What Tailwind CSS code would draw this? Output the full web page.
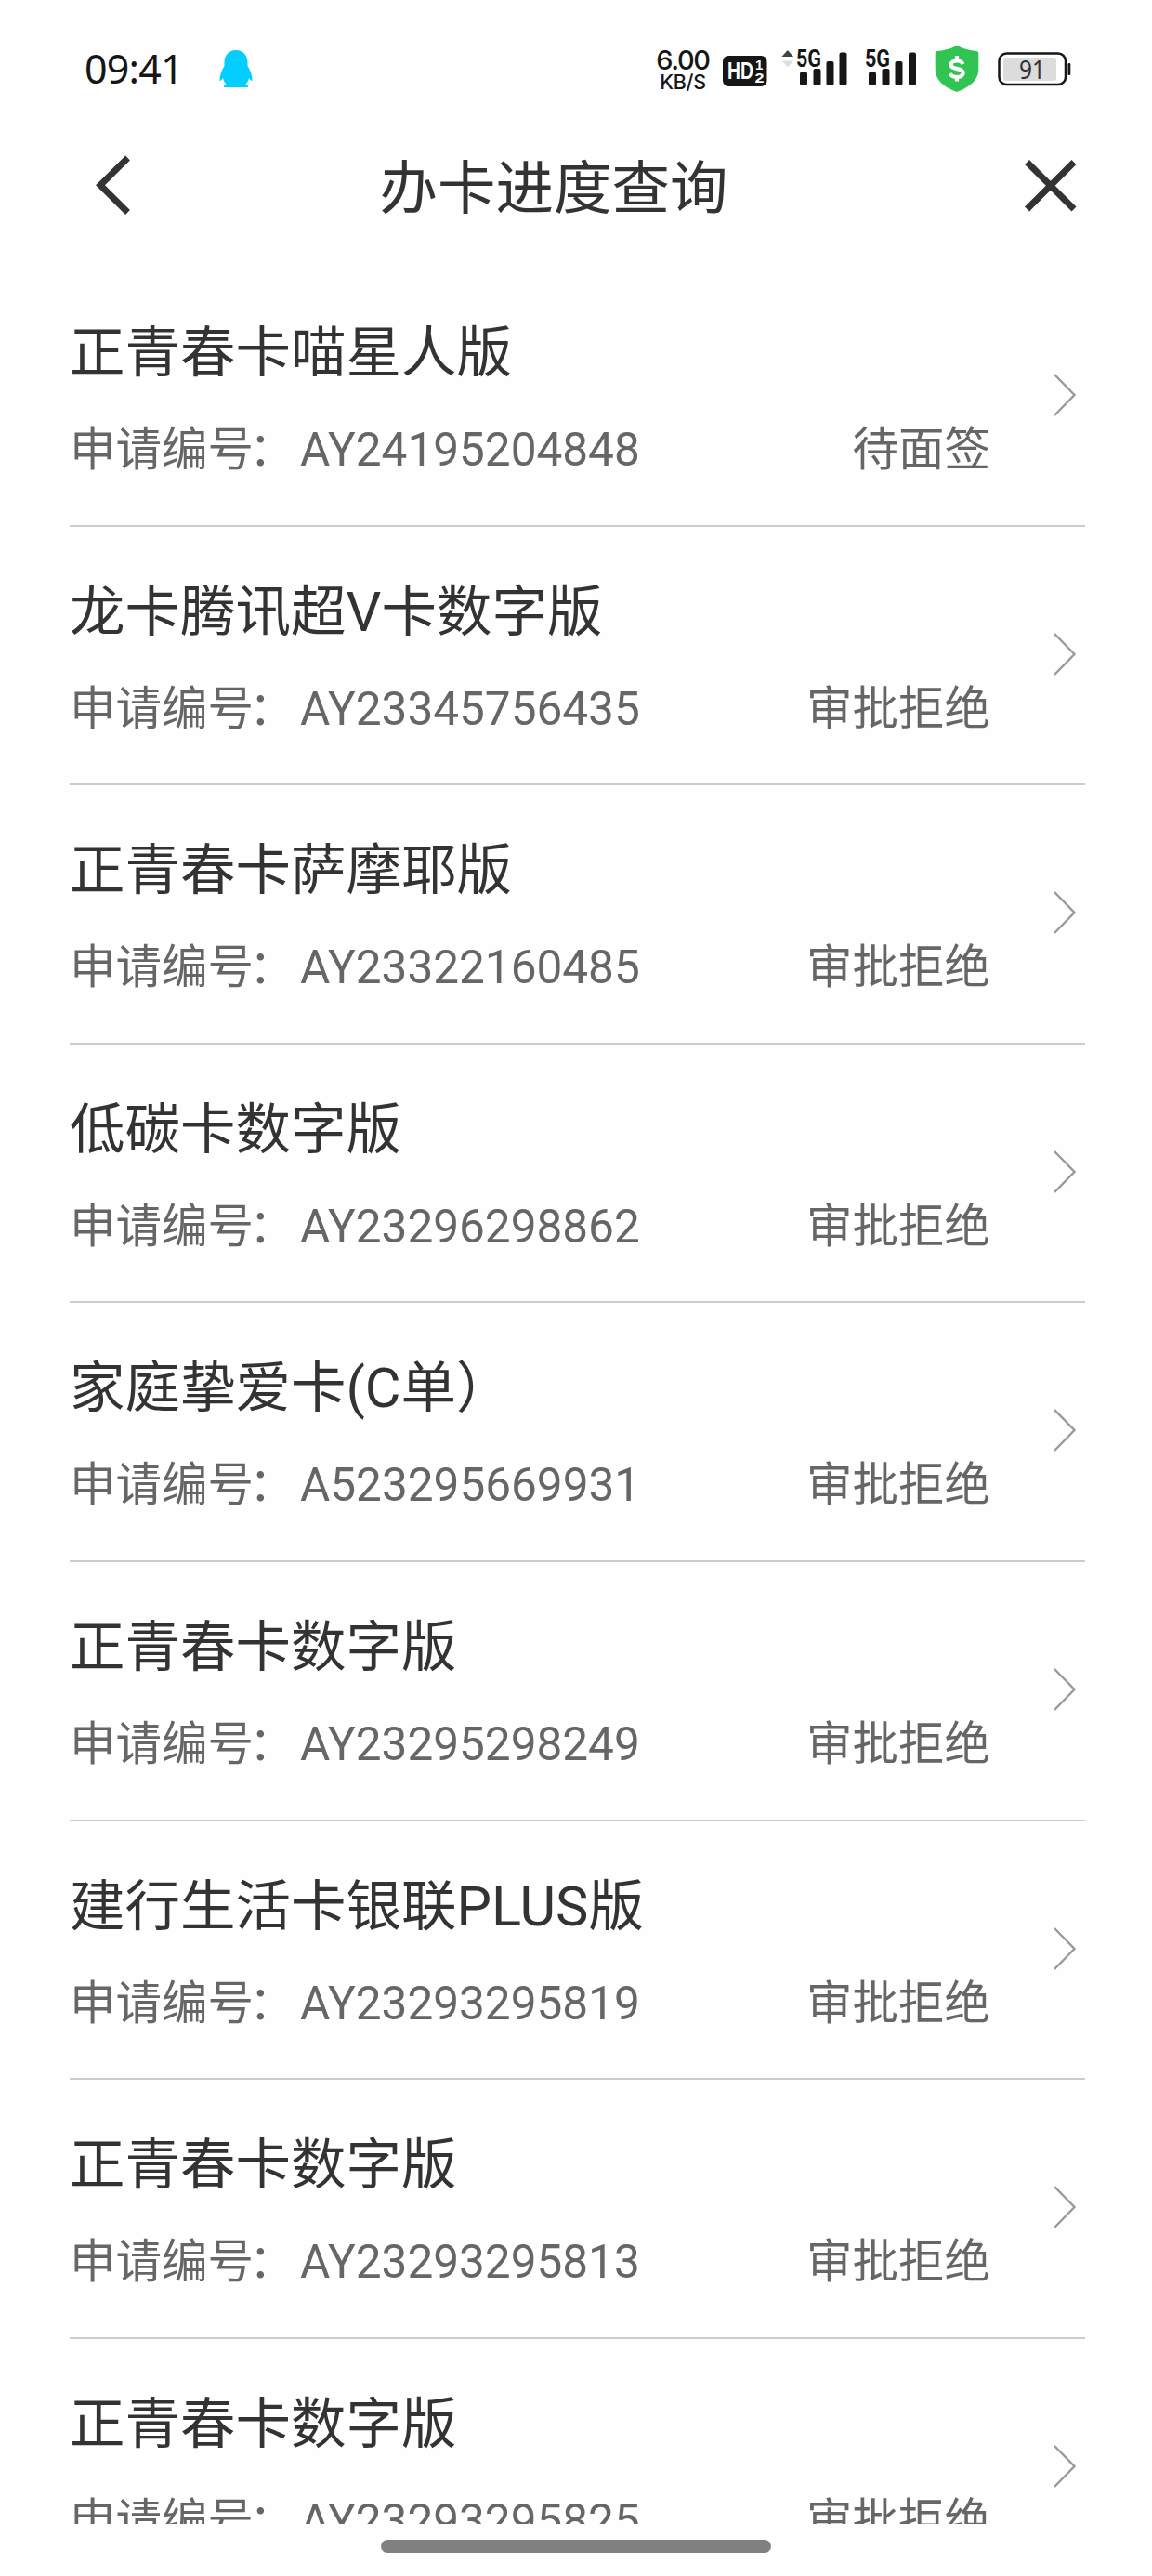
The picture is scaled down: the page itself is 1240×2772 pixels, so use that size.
<!DOCTYPE html>
<html lang="zh-CN">
<head>
    <meta charset="UTF-8">
    <meta name="viewport" content="width=device-width, initial-scale=1.0">
    <title>办卡进度查询</title>
    <script src="https://cdn.jsdelivr.net/npm/@tailwindcss/browser@4"></script>
</head>
<body class="bg-[#fefefe] h-[2772px] overflow-hidden flex flex-col font-[Roboto,'Noto_Sans_CJK_SC',sans-serif] text-[#333]">
    <!-- Status bar -->
    <div class="h-[148px] shrink-0 flex items-start pt-[44px] pl-[91px] pr-[87px] text-[#161616]">
        <span class="w-[142px] h-[60px] leading-[60px] text-[43px] tracking-[-0.8px] font-['Noto_Sans'] whitespace-nowrap">09:41</span>
        <svg class="w-[42px] h-[60px]" viewBox="233 44 42 60" fill="#04cdff">
            <path d="M254 54c-8 0-12.500 6-12.500 13v4c-3 5-5 10-5 15 0 1.500 1.500 1.500 3.500-2 .6 3 1.700 5 3.500 6.500-2 .6-2.500 1.300-2.500 3.500h26c0-2.200-.5-2.900-2.500-3.500 1.800-1.500 2.900-3.500 3.500-6.500 2 3.500 3.500 3.500 3.500 2 0-5-2-10-5-15v-4c0-7-4.500-13-12.500-13z"/>
        </svg>
        <div class="ml-auto w-[60px] h-[60px] flex flex-col items-center pt-[8px] font-[Inter] font-medium whitespace-nowrap">
            <span class="text-[29px] leading-[26px] tracking-[-1.3px]">6.00</span>
            <span class="text-[21.5px] leading-[22px] tracking-[-0.3px] -mt-[1px]">KB/S</span>
        </div>
        <svg class="w-[48px] h-[60px] ml-[13px]" viewBox="779 44 48 60">
            <rect x="779" y="60" width="47.500" height="33" rx="6" fill="#161616"/>
            <g fill="#fff" font-family="Liberation Sans" font-weight="bold">
                <text x="784" y="85" font-size="26" textLength="28" lengthAdjust="spacingAndGlyphs">HD</text>
                <text x="814" y="75" font-size="15">1</text>
                <text x="813.500" y="88.500" font-size="15" textLength="10" lengthAdjust="spacingAndGlyphs">2</text>
            </g>
        </svg>
        <svg class="w-[74px] h-[60px] ml-[13px]" viewBox="840 44 74 60" fill="#161616">
            <path d="M842.500 61l6.300-7 6.300 7z" fill="#444"/>
            <path d="M842.500 65.500h12.600l-6.300 6.500z" fill="#ddd"/>
            <text x="858" y="72" font-size="25.500" font-family="Roboto" font-weight="bold" textLength="27" lengthAdjust="spacingAndGlyphs">5G</text>
            <rect x="862" y="77.500" width="8" height="14.500" rx="2"/>
            <rect x="876.500" y="74" width="8" height="18" rx="2"/>
            <rect x="890.500" y="66" width="8" height="26" rx="2"/>
            <rect x="904.500" y="56.500" width="8" height="35.500" rx="2"/>
        </svg>
        <svg class="w-[60px] h-[60px] ml-[16px]" viewBox="930 44 60 60" fill="#161616">
            <text x="932" y="72" font-size="25.500" font-family="Roboto" font-weight="bold" textLength="27" lengthAdjust="spacingAndGlyphs">5G</text>
            <rect x="936" y="77.500" width="8" height="14.500" rx="2"/>
            <rect x="950.500" y="74" width="8" height="18" rx="2"/>
            <rect x="964.500" y="66" width="8" height="26" rx="2"/>
            <rect x="979" y="56.500" width="8" height="35.500" rx="2"/>
        </svg>
        <svg class="w-[50px] h-[60px] ml-[16px]" viewBox="1006 44 50 60">
            <path d="M1031 49c6 3.500 14 5 21 6 1.500.2 2.300 1 2.300 2.500v17c0 12.500-11 20-23.300 24.500-12.300-4.500-23.300-12-23.300-24.500v-17c0-1.500.8-2.300 2.300-2.500 7-1 15-2.500 21-6z" fill="#30c553"/>
            <path d="M1037.500 69c-1-2.500-3.500-3.500-6.500-3.500-3.500 0-6.300 1.500-6.300 4.300 0 5.700 13 3 13 8.700 0 3-3 4.500-6.700 4.500-3.500 0-6.300-1.300-7.300-4M1031 60v5M1031 83v4.500" fill="none" stroke="#fff" stroke-width="4.200"/>
        </svg>
        <svg class="w-[80px] h-[60px] ml-[18px]" viewBox="1074 44 80 60">
            <rect x="1076.500" y="57.500" width="71.500" height="33.500" rx="8" fill="none" stroke="#161616" stroke-width="2.500"/>
            <rect x="1081" y="62" width="57" height="25" rx="3" fill="#dcdcdc"/>
            <rect x="1150.500" y="68" width="2.800" height="13" rx="1.200" fill="#161616"/>
            <text x="1098" y="85" font-size="28" font-family="Noto Sans" fill="#333" textLength="28" lengthAdjust="spacingAndGlyphs">91</text>
        </svg>
    </div>

    <!-- Header -->
    <header class="h-[140px] shrink-0 flex items-start justify-between pl-[102px] pr-[81px]">
        <svg class="w-[40px] h-[66px] mt-[18px]" viewBox="0 0 40 66" fill="none" stroke="#333" stroke-width="7">
            <path d="M35.500 4L6 33.200L35.500 62.500"/>
        </svg>
        <h1 class="text-[62.500px] leading-[80px] mt-[16px] mr-[53px]">办卡进度查询</h1>
        <svg class="w-[56px] h-[56px] mt-[24px]" viewBox="0 0 56 56" fill="none" stroke="#333" stroke-width="7">
            <path d="M2.500 2.500L53 53M53 2.500L2.500 53"/>
        </svg>
    </header>

    <main id="cardList" class="h-[2428px] shrink-0 overflow-hidden pl-[75px] pr-[72px]"></main>

    <!-- Home indicator -->
    <div class="w-[420px] h-[14px] shrink-0 mt-[17px] mx-auto rounded-full bg-[#808080]"></div>

    <script>
        const cards = [
            { name: '正青春卡喵星人版', no: 'AY24195204848', status: '待面签' },
            { name: '龙卡腾讯超V卡数字版', no: 'AY23345756435', status: '审批拒绝' },
            { name: '正青春卡萨摩耶版', no: 'AY23322160485', status: '审批拒绝' },
            { name: '低碳卡数字版', no: 'AY23296298862', status: '审批拒绝' },
            { name: '家庭挚爱卡(C单）', no: 'A523295669931', status: '审批拒绝' },
            { name: '正青春卡数字版', no: 'AY23295298249', status: '审批拒绝' },
            { name: '建行生活卡银联PLUS版', no: 'AY23293295819', status: '审批拒绝' },
            { name: '正青春卡数字版', no: 'AY23293295813', status: '审批拒绝' },
            { name: '正青春卡数字版', no: 'AY23293295825', status: '审批拒绝' },
        ];

        document.getElementById('cardList').innerHTML = cards.map(card => `
            <div class="h-[278.6px] flex items-start border-b-2 border-[#ccc]">
                <div class="flex-1 pt-[62px]">
                    <h2 class="text-[59.5px] leading-[60px] whitespace-nowrap">${card.name}</h2>
                    <div class="mt-[49px] flex justify-between text-[49.5px] leading-[50px] text-[#666] whitespace-nowrap">
                        <p>申请编号<span class="-ml-[5px] mr-[5.5px]">：</span>${card.no}</p>
                        <p>${card.status}</p>
                    </div>
                </div>
                <svg class="w-[26px] h-[48px] mt-[113px] ml-[67px] mr-[9px]" viewBox="0 0 26 48" fill="none" stroke="#999" stroke-width="2.4">
                    <path d="M2 2L23.500 24L2 46"/>
                </svg>
            </div>
        `).join('');
    </script>
</body>
</html>
